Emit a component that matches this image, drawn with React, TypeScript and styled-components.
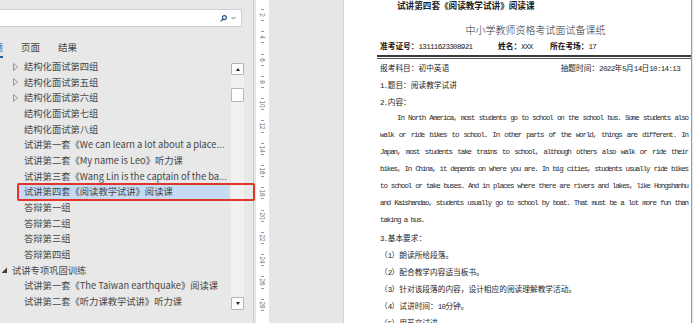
import styled, { createGlobalStyle } from 'styled-components';

const GlobalStyle = createGlobalStyle`
  html, body {
    margin: 0;
    padding: 0;
  }
  body {
    background: #e6e6e6;
    font-family: "Noto Sans CJK SC", sans-serif;
    overflow: hidden;
  }
`;

const Window = styled.div`
  position: relative;
  display: flex;
  width: 693px;
  height: 323px;
  overflow: hidden;
  background: #e6e6e6;
`;

/* ---------- navigation pane ---------- */

const NavPane = styled.aside`
  flex: none;
  width: 254px;
  box-sizing: border-box;
  border-right: 1px solid #c9c9c9;
  background: #e8e8e8;
  display: flex;
  flex-direction: column;
  overflow: hidden;
`;

const SearchBox = styled.div`
  height: 18px;
  box-sizing: border-box;
  margin: 9px 11px 0 -4px;
  border: 1px solid #c8d0da;
  background: #fff;
  display: flex;
  align-items: center;
  justify-content: flex-end;
  gap: 4px;
  padding-right: 5px;
`;

const TabRow = styled.div`
  display: flex;
  gap: 18px;
  margin: 13px 0 0 -16px;
`;

const Tab = styled.div<{ $active?: boolean }>`
  font-size: 9.5px;
  line-height: 14px;
  padding-bottom: 2px;
  color: ${({ $active }) => ($active ? '#2b579a' : '#444')};
  border-bottom: 2px solid ${({ $active }) => ($active ? '#2b579a' : 'transparent')};
`;

const TreeArea = styled.div`
  display: flex;
  margin-top: 1px;
  padding-right: 9px;
`;

const TreeList = styled.div`
  flex: 1;
  min-width: 0;
  display: flex;
  flex-direction: column;
  padding-right: 1px;
`;

const Row = styled.div<{ $depth: number }>`
  display: flex;
  align-items: center;
  height: 15.67px;
  padding-left: ${({ $depth }) => ($depth - 1) * 12}px;
`;

const Toggle = styled.span`
  flex: none;
  width: 7px;
  display: flex;
  align-items: center;
  justify-content: center;
`;

const Label = styled.span<{ $selected?: boolean }>`
  flex: 1;
  min-width: 0;
  padding-left: 5px;
  line-height: 15.67px;
  white-space: nowrap;
  overflow: hidden;
  font-size: 9.3px;
  color: #474747;
  background: ${({ $selected }) => ($selected ? '#c6dbf3' : 'transparent')};
`;

const ScrollBar = styled.div`
  flex: none;
  width: 13px;
  height: 247px;
  margin-top: 4px;
  display: flex;
  flex-direction: column;
`;

const ScrollButton = styled.div<{ $down?: boolean }>`
  flex: none;
  height: ${({ $down }) => ($down ? 13 : 12)}px;
  box-sizing: border-box;
  border: 1px solid #b4b4b4;
  border-radius: 1px;
  background: #fcfcfc;
  display: flex;
  align-items: center;
  justify-content: center;
`;

const Arrow = styled.span<{ $down?: boolean }>`
  width: 0;
  height: 0;
  border-left: 2.5px solid transparent;
  border-right: 2.5px solid transparent;
  ${({ $down }) => ($down ? 'border-top: 3px solid #222;' : 'border-bottom: 3px solid #222;')}
`;

const Track = styled.div`
  flex: 1;
  background: #f0f0f0;
  display: flex;
  flex-direction: column;
`;

const Thumb = styled.div`
  margin-top: 13px;
  height: 14px;
  box-sizing: border-box;
  border: 1px solid #b8b8b8;
  border-radius: 1px;
  background: #fff;
`;

const Callout = styled.div`
  position: absolute;
  left: 17px;
  top: 183px;
  width: 238px;
  height: 18px;
  box-sizing: border-box;
  border: 2px solid #e3342c;
  border-radius: 2px;
  pointer-events: none;
`;

/* ---------- ruler + document ---------- */

const Ruler = styled.div`
  flex: none;
  width: 13px;
  margin: 0 74px 0 2px;
  padding-top: 9px;
  background: #fff;
  display: flex;
  flex-direction: column;
`;

const RulerUnit = styled.div`
  flex: none;
  height: 11.15px;
  display: flex;
  flex-direction: column;
  align-items: center;
`;

const Tick = styled.span`
  flex: none;
  width: 3px;
  height: 1px;
  background: #9a9a9a;
`;

const RulerNum = styled.span`
  flex: 1;
  display: flex;
  align-items: center;
  justify-content: center;
  font-family: "Liberation Sans", sans-serif;
  font-size: 6.5px;
  color: #6e6e6e;
  transform: rotate(90deg);
`;

const Page = styled.main`
  flex: 1;
  min-width: 0;
  margin-right: 1px;
  background: #fff;
  border-left: 1px solid #d2d2d2;
  border-right: 1px solid #9c9c9c;
  padding: 0 0 0 36px;
  color: #222;
  overflow: hidden;
`;

const RunningHead = styled.div`
  padding-left: 17px;
  font-size: 8.6px;
  font-weight: 700;
  line-height: 10px;
  color: #1e1e1e;
  white-space: nowrap;
`;

const DocTitle = styled.div`
  margin-top: 13px;
  text-align: center;
  font-size: 10px;
  line-height: 14px;
  color: #333;
  font-weight: 300;
`;

const InfoRow = styled.div`
  display: flex;
  align-items: baseline;
  margin-top: 3px;
  font-size: 7.7px;
  line-height: 12px;
  white-space: nowrap;
`;

const InfoField = styled.div<{ $w?: number }>`
  flex: none;
  width: ${({ $w }) => ($w ? `${$w}px` : 'auto')};
`;

const InfoLabel = styled.b`
  font-weight: 700;
  color: #111;
`;

const Divider = styled.div`
  margin: 2px 0 0 -3px;
  height: 1px;
  border-top: 2px solid #3a3a3a;
  border-bottom: 1px solid #555;
`;

const TextLine = styled.div`
  height: 17px;
  line-height: 17px;
  font-size: 7.7px;
  color: #262626;
  white-space: nowrap;
`;

const SplitLine = styled(TextLine)`
  display: flex;
  align-items: baseline;
  justify-content: space-between;
  padding-right: 11px;
`;

const ParaLine = styled.div<{ $first?: boolean; $last?: boolean }>`
  height: 17px;
  line-height: 17px;
  padding: 0 3px 0 ${({ $first }) => ($first ? 17 : 0)}px;
  font-family: "Liberation Mono", monospace;
  font-size: 7.5px;
  letter-spacing: -1.1px;
  color: #2e2e2e;
  text-align: justify;
  text-align-last: ${({ $last }) => ($last ? 'left' : 'justify')};
  overflow: hidden;
`;

const Ascii = styled.span`
  font-family: "Liberation Mono", monospace;
  font-size: 7.5px;
  letter-spacing: -0.65px;
`;

/* ---------- data ---------- */

type TreeItem = { text: string; depth: number; toggle?: 'closed' | 'open'; selected?: boolean };

const tree: TreeItem[] = [
  { text: '结构化面试第四组', depth: 2, toggle: 'closed' },
  { text: '结构化面试第五组', depth: 2, toggle: 'closed' },
  { text: '结构化面试第六组', depth: 2, toggle: 'closed' },
  { text: '结构化面试第七组', depth: 2 },
  { text: '结构化面试第八组', depth: 2 },
  { text: '试讲第一套《We can learn a lot about a place...', depth: 2 },
  { text: '试讲第二套《My name is Leo》听力课', depth: 2 },
  { text: '试讲第三套《Wang Lin is the captain of the ba...', depth: 2 },
  { text: '试讲第四套《阅读教学试讲》阅读课', depth: 2, selected: true },
  { text: '答辩第一组', depth: 2 },
  { text: '答辩第二组', depth: 2 },
  { text: '答辩第三组', depth: 2 },
  { text: '答辩第四组', depth: 2 },
  { text: '试讲专项巩固训练', depth: 1, toggle: 'open' },
  { text: '试讲第一套《The Taiwan earthquake》阅读课', depth: 2 },
  { text: '试讲第二套《听力课教学试讲》听力课', depth: 2 },
];

const paragraph = [
  'In North America, most students go to school on the school bus. Some students also',
  'walk or ride bikes to school. In other parts of the world, things are different. In',
  'Japan, most students take trains to school, although others also walk or ride their',
  'bikes, In China, it depends on where you are. In big cities, students usually ride bikes',
  'to school or take buses. And in places where there are rivers and lakes, like Hongshanhu',
  'and Kaishandao, students usually go to school by boat. That must be a lot more fun than',
  'taking a bus.',
];

const requirements = [
  '（1）朗读所给段落。',
  '（2）配合教学内容适当板书。',
  '（3）针对该段落的内容，设计相应的阅读理解教学活动。',
  '（4）试讲时间：10分钟。',
  '（5）用英文试讲。',
];

// SimSun-style text: half-width Latin runs in a mono face next to the CJK glyphs
const Mixed = ({ text }: { text: string }) => (
  <>
    {text.split(/([\x20-\x7e]+)/).map((part, i) =>
      /^[\x20-\x7e]+$/.test(part) ? <Ascii key={i}>{part}</Ascii> : part
    )}
  </>
);

const TreeToggle = ({ kind }: { kind?: 'closed' | 'open' }) => (
  <Toggle>
    {kind === 'closed' && (
      <svg width="5" height="8" viewBox="0 0 5 8">
        <polygon points="0.5,0.5 4.5,4 0.5,7.5" fill="none" stroke="#8c8c8c" strokeWidth="0.9" />
      </svg>
    )}
    {kind === 'open' && (
      <svg width="6" height="6" viewBox="0 0 6 6">
        <polygon points="6,0.5 6,6 0.5,6" fill="#3c3c3c" />
      </svg>
    )}
  </Toggle>
);

const SearchIcon = () => (
  <svg width="7" height="7" viewBox="0 0 7 7">
    <circle cx="4.4" cy="2.6" r="2" fill="none" stroke="#2b4f86" strokeWidth="1.1" />
    <line x1="3" y1="4" x2="0.6" y2="6.4" stroke="#2b4f86" strokeWidth="1.2" />
  </svg>
);

const Chevron = () => (
  <svg width="5" height="4" viewBox="0 0 5 4">
    <polyline points="0.5,1 2.5,3 4.5,1" fill="none" stroke="#666" strokeWidth="0.9" />
  </svg>
);

const App = () => (
  <>
    <GlobalStyle />
    <Window>
      <NavPane>
        <SearchBox>
          <SearchIcon />
          <Chevron />
        </SearchBox>
        <TabRow>
          <Tab $active>标题</Tab>
          <Tab>页面</Tab>
          <Tab>结果</Tab>
        </TabRow>
        <TreeArea>
          <TreeList>
            {tree.map((item) => (
              <Row key={item.text} $depth={item.depth}>
                <TreeToggle kind={item.toggle} />
                <Label $selected={item.selected}>{item.text}</Label>
              </Row>
            ))}
          </TreeList>
          <ScrollBar>
            <ScrollButton>
              <Arrow />
            </ScrollButton>
            <Track>
              <Thumb />
            </Track>
            <ScrollButton $down>
              <Arrow $down />
            </ScrollButton>
          </ScrollBar>
        </TreeArea>
      </NavPane>

      <Ruler>
        {Array.from({ length: 28 }, (_, k) => (
          <RulerUnit key={k}>
            <Tick />
            <RulerNum>{k % 2 === 0 ? k + 2 : ''}</RulerNum>
          </RulerUnit>
        ))}
      </Ruler>

      <Page>
        <RunningHead>试讲第四套《阅读教学试讲》阅读课</RunningHead>
        <DocTitle>中小学教师资格考试面试备课纸</DocTitle>
        <InfoRow>
          <InfoField $w={118}>
            <InfoLabel>准考证号：</InfoLabel>
            <Ascii>13111623308921</Ascii>
          </InfoField>
          <InfoField $w={52}>
            <InfoLabel>姓名：</InfoLabel>
            <Ascii>XXX</Ascii>
          </InfoField>
          <InfoField>
            <InfoLabel>所在考场：</InfoLabel>
            <Ascii>17</Ascii>
          </InfoField>
        </InfoRow>
        <Divider />
        <SplitLine>
          <span>报考科目：初中英语</span>
          <span>
            <Mixed text="抽题时间：2022年5月14日10:14:13" />
          </span>
        </SplitLine>
        <TextLine>
          <Mixed text="1.题目：阅读教学试讲" />
        </TextLine>
        <TextLine>
          <Mixed text="2.内容：" />
        </TextLine>
        {paragraph.map((line, i) => (
          <ParaLine key={i} $first={i === 0} $last={i === paragraph.length - 1}>
            {line}
          </ParaLine>
        ))}
        <TextLine>
          <Mixed text="3.基本要求：" />
        </TextLine>
        {requirements.map((line) => (
          <TextLine key={line}>
            <Mixed text={line} />
          </TextLine>
        ))}
      </Page>

      <Callout />
    </Window>
  </>
);

export default App;
